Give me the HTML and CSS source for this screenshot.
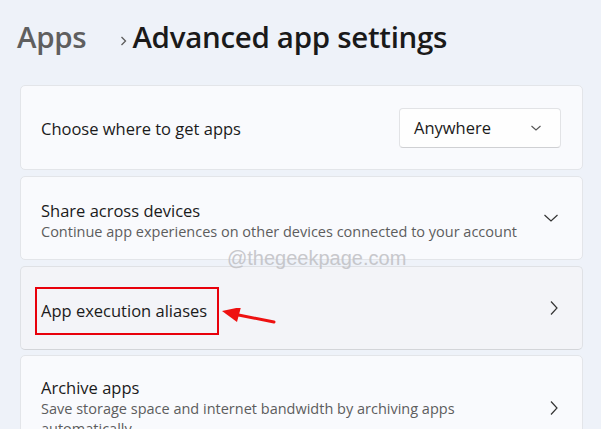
FILE: index.html
```html
<!DOCTYPE html>
<html>
<head>
<meta charset="utf-8">
<link rel="stylesheet" href="styles.css">
</head>
<body>
<div class="page">
  <header class="crumbs">
    <span class="crumb-parent">Apps</span>
    <svg class="crumb-sep" width="10" height="12" viewBox="0 0 10 12"><path d="M2.5 2 L6.5 6 L2.5 10" fill="none" stroke="#5c5c5c" stroke-width="1.3"/></svg>
    <span class="crumb-current">Advanced app settings</span>
  </header>

  <div class="cards">
    <div class="card c1">
      <div class="text"><div class="title">Choose where to get apps</div></div>
      <div class="dropdown">
        <span>Anywhere</span>
        <svg width="12" height="8" viewBox="0 0 12 8"><path d="M1.5 2 L6 6 L10.5 2" fill="none" stroke="#555" stroke-width="1.1"/></svg>
      </div>
    </div>

    <div class="card c2">
      <div class="text">
        <div class="title">Share across devices</div>
        <div class="sub">Continue app experiences on other devices connected to your account</div>
      </div>
      <svg class="chev-down" width="16" height="10" viewBox="0 0 16 10"><path d="M1.5 2 L8 8 L14.5 2" fill="none" stroke="#333" stroke-width="1.2"/></svg>
    </div>

    <div class="card c3">
      <div class="text">
        <div class="title highlight">App execution aliases</div>
      </div>
      <svg class="chev-right" width="10" height="16" viewBox="0 0 10 16"><path d="M2 1.5 L8 8 L2 14.5" fill="none" stroke="#333" stroke-width="1.2"/></svg>
      <svg class="arrow" width="56" height="20" viewBox="0 0 56 20"><path d="M52 14 L14 6.5" stroke="#ee1111" stroke-width="3" stroke-linecap="round"/><path d="M0 3 L19 -1 L15 14 Z" fill="#ee1111"/></svg>
      <div class="watermark">@thegeekpage.com</div>
    </div>

    <div class="card c4">
      <div class="text">
        <div class="title">Archive apps</div>
        <div class="sub">Save storage space and internet bandwidth by archiving apps automatically</div>
      </div>
      <svg class="chev-right" width="10" height="16" viewBox="0 0 10 16"><path d="M2 1.5 L8 8 L2 14.5" fill="none" stroke="#333" stroke-width="1.2"/></svg>
    </div>
  </div>
</div>
</body>
</html>
```

FILE: styles.css
```css
html, body {
  margin: 0;
  padding: 0;
}
body {
  background: #eef2f9;
  font-family: "Open Sans", "Noto Sans", sans-serif;
  color: #1b1b1b;
  width: 601px;
  height: 429px;
  overflow: hidden;
}
.page {
  padding: 0 18px 0 20px;
}
.crumbs {
  display: flex;
  align-items: baseline;
  height: 85px;
  padding-top: 16px;
  box-sizing: border-box;
  margin-left: -3px;
}
.crumb-parent {
  font-size: 29.5px;
  font-weight: 600;
  color: #5f5f5f;
  letter-spacing: -0.3px;
}
.crumb-sep {
  margin: 0 3px 0 33px;
  position: relative;
  top: -1px;
}
.crumb-current {
  font-size: 29.5px;
  font-weight: 600;
  color: #1a1a1a;
  letter-spacing: -0.3px;
}
.cards {
  display: flex;
  flex-direction: column;
  gap: 6px;
}
.card {
  position: relative;
  display: flex;
  align-items: center;
  background: #f9fafd;
  border: 1px solid #e3e5e9;
  border-radius: 5px;
  box-sizing: border-box;
  padding: 0 24px 0 20px;
}
.c1 { height: 85px; padding-top: 2px; }
.c2 { height: 84px; padding-top: 6px; }
.c3 { height: 84px; background: #f3f4f8; border-color: #dfe1e5; border-bottom-color: #d3d5d9; }
.c4 { height: 90px; padding-top: 15px; margin-top: -1px; }
.c1 .dropdown { margin-top: -2px; }
.c2 .chev-down { margin-top: -6px; }
.text {
  flex: 1;
}
.title {
  font-size: 16.5px;
  line-height: 22px;
  color: #1b1b1b;
}
.sub {
  font-size: 14.5px;
  line-height: 20px;
  color: #5d5d5d;
}
.c4 .sub {
  width: 470px;
}
.dropdown {
  display: flex;
  align-items: center;
  justify-content: space-between;
  width: 162px;
  height: 40px;
  box-sizing: border-box;
  padding: 0 18px 0 14px;
  background: #fefefe;
  border: 1px solid #e2e3e6;
  border-bottom-color: #cfd0d3;
  border-radius: 4px;
  margin-right: -3px;
  font-size: 16.5px;
}
.chev-down { margin-right: -1px; }
.chev-right { margin-right: -1px; }
.highlight {
  display: inline-block;
  border: 2.5px solid #e8000b;
  margin-left: -6px;
  margin-top: 5px;
  padding: 11px 10px 11px 4px;
}
.arrow {
  position: absolute;
  left: 201px;
  top: 41px;
}
.watermark {
  position: absolute;
  left: 206px;
  top: -20px;
  font-family: "Liberation Sans", Arial, sans-serif;
  font-size: 20px;
  color: #c0c0c4;
  opacity: 0.85;
}
```
